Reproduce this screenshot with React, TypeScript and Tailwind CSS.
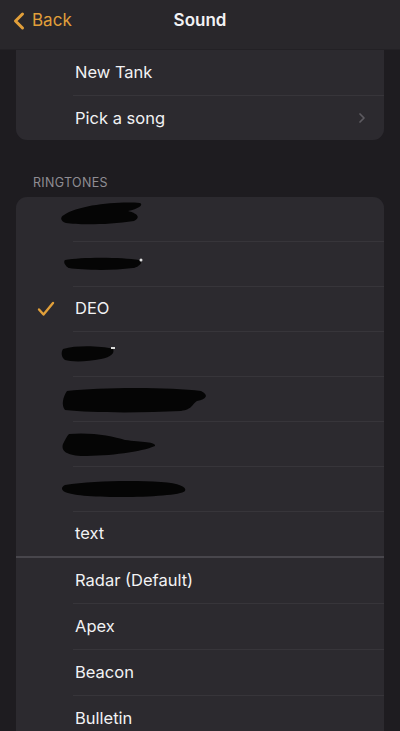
import { ChevronLeft, ChevronRight } from 'lucide-react';

type Row = {
  label?: string;
  blot?: number;
  checked?: boolean;
};

const ringtones: Row[] = [
  { blot: 0 },
  { blot: 1 },
  { label: 'DEO', checked: true },
  { blot: 2 },
  { blot: 3 },
  { blot: 4 },
  { blot: 5 },
  { label: 'text' },
];

const defaults = ['Radar (Default)', 'Apex', 'Beacon', 'Bulletin'];

// black marker scribbles over the hidden names
const Blot = ({ kind }: { kind: number }) => {
  const shapes = [
    <svg key="0" width="90" height="30" viewBox="0 0 90 30">
      <path d="M6 18 C20 8 60 4 82 6 C86 8 80 12 70 14 C78 16 84 20 76 24 C50 28 20 28 8 26 C2 24 2 20 6 18Z" fill="#050505" />
    </svg>,
    <svg key="1" width="90" height="20" viewBox="0 0 90 20">
      <path d="M4 6 C20 3 60 3 78 6 C82 8 80 12 72 14 C50 17 20 16 8 14 C4 12 2 8 4 6Z" fill="#050505" />
      <circle cx="80" cy="6" r="1.5" fill="#ddd" />
    </svg>,
    <svg key="2" width="64" height="22" viewBox="0 0 64 22">
      <path d="M2 6 C16 2 40 3 52 6 C54 10 50 14 40 16 C26 19 10 19 4 17 C0 14 0 9 2 6Z" fill="#050505" />
      <rect x="50" y="4" width="4" height="2" fill="#ddd" />
    </svg>,
    <svg key="3" width="150" height="28" viewBox="0 0 150 28">
      <path d="M6 6 C40 2 110 2 140 6 C148 10 146 14 136 16 C130 20 132 24 120 26 C80 28 30 28 4 25 C0 20 2 12 6 6Z" fill="#050505" />
    </svg>,
    <svg key="4" width="100" height="28" viewBox="0 0 100 28">
      <path d="M8 4 C30 2 52 6 64 10 C80 12 96 12 94 16 C80 22 50 26 20 26 C4 25 0 20 2 14 C4 10 6 6 8 4Z" fill="#050505" />
    </svg>,
    <svg key="5" width="130" height="20" viewBox="0 0 130 20">
      <path d="M4 6 C30 2 70 1 100 3 C118 4 126 8 124 12 C120 16 90 18 60 18 C30 18 10 16 4 13 C0 11 0 8 4 6Z" fill="#050505" />
    </svg>,
  ];
  return shapes[kind];
};

const Separator = ({ full }: { full?: boolean }) =>
  full ? (
    <div className="h-[2px] bg-[#48464c]" />
  ) : (
    <div className="ml-[57px] h-px bg-[#37353a]" />
  );

export default function App() {
  return (
    <div
      className="h-[731px] w-[400px] overflow-hidden bg-[#1e1c20] text-[#f2f2f4]"
      style={{ fontFamily: 'Inter, "Noto Sans", sans-serif' }}
    >
      {/* Nav bar */}
      <div className="relative h-[50px] border-b border-[#232125] bg-[#29272b]">
        <div className="flex h-[42px] items-center pl-[5px] text-[#e19f3a]">
          <ChevronLeft className="h-[28px] w-[28px]" strokeWidth={2.6} />
          <span className="-ml-[1px] text-[17px]">Back</span>
        </div>
        <div className="absolute inset-x-0 top-0 flex h-[42px] items-center justify-center text-[17px] font-semibold pointer-events-none">
          Sound
        </div>
      </div>

      {/* Top card (scrolled, top hidden under the bar) */}
      <div className="mx-4 overflow-hidden rounded-b-[11px] bg-[#2c2a2f]">
        <div className="flex h-[45px] items-center pl-[59px] text-[16.5px]">New Tank</div>
        <Separator />
        <div className="flex h-[44px] items-center justify-between pl-[59px] pr-[14px] text-[16.5px]">
          <span>Pick a song</span>
          <ChevronRight className="h-[16px] w-[16px] text-[#5d5b61]" strokeWidth={2.6} />
        </div>
      </div>

      <div className="px-[33px] pb-[4px] pt-[34px] text-[12.5px] tracking-wide text-[#8f8d93]">
        RINGTONES
      </div>

      {/* Ringtones card */}
      <div className="mx-4 overflow-hidden rounded-t-[11px] bg-[#2c2a2f]">
        {ringtones.map((row, i) => (
          <div key={i}>
            <div className="flex h-[44px] items-center text-[16.5px]">
              <div className="flex w-[59px] justify-center pl-[1px]">
                {row.checked && (
                  <svg width="18" height="16" viewBox="0 0 18 16">
                    <path d="M2 8.5 L6.5 13.5 L16 2" fill="none" stroke="#e19f3a" strokeWidth="2.4" strokeLinecap="round" strokeLinejoin="round" />
                  </svg>
                )}
              </div>
              {row.label ? (
                <span>{row.label}</span>
              ) : (
                <div className={row.blot === 0 ? '-mt-[14px] -ml-[17px]' : '-ml-[14px]'}>
                  <Blot kind={row.blot ?? 0} />
                </div>
              )}
            </div>
            {i < ringtones.length - 1 ? <Separator /> : <Separator full />}
          </div>
        ))}
        {defaults.map((name, i) => (
          <div key={name}>
            <div className="flex h-[45px] items-center pl-[59px] text-[16.5px]">{name}</div>
            {i < defaults.length - 1 && <Separator />}
          </div>
        ))}
      </div>
    </div>
  );
}
